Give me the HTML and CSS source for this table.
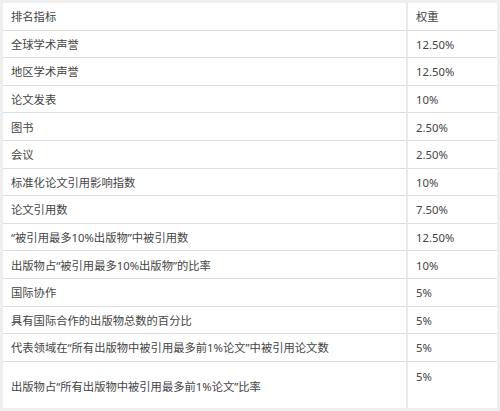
FILE: index.html
```html
<!DOCTYPE html>
<html lang="zh-CN">
<head>
<meta charset="utf-8">
<link rel="stylesheet" href="styles.css">
</head>
<body>
<table class="rank-table">
  <tbody>
    <tr><td class="name">排名指标</td><td class="weight">权重</td></tr>
    <tr><td class="name">全球学术声誉</td><td class="weight">12.50%</td></tr>
    <tr><td class="name">地区学术声誉</td><td class="weight">12.50%</td></tr>
    <tr><td class="name">论文发表</td><td class="weight">10%</td></tr>
    <tr><td class="name">图书</td><td class="weight">2.50%</td></tr>
    <tr><td class="name">会议</td><td class="weight">2.50%</td></tr>
    <tr><td class="name">标准化论文引用影响指数</td><td class="weight">10%</td></tr>
    <tr><td class="name">论文引用数</td><td class="weight">7.50%</td></tr>
    <tr><td class="name">“被引用最多10%出版物”中被引用数</td><td class="weight">12.50%</td></tr>
    <tr><td class="name">出版物占“被引用最多10%出版物”的比率</td><td class="weight">10%</td></tr>
    <tr><td class="name">国际协作</td><td class="weight">5%</td></tr>
    <tr><td class="name">具有国际合作的出版物总数的百分比</td><td class="weight">5%</td></tr>
    <tr><td class="name">代表领域在“所有出版物中被引用最多前1%论文”中被引用论文数</td><td class="weight">5%</td></tr>
    <tr class="last"><td class="name">出版物占“所有出版物中被引用最多前1%论文”比率</td><td class="weight top">5%</td></tr>
  </tbody>
</table>
</body>
</html>
```

FILE: styles.css
```css
html, body {
  margin: 0;
  padding: 0;
  background: #ffffff;
}

.rank-table {
  width: 500px;
  border: 3px solid #efefef;
  border-spacing: 0;
  border-collapse: separate;
  font-family: "Noto Sans", "Noto Sans CJK SC", sans-serif;
  font-size: 11.3px;
  color: #444444;
  table-layout: fixed;
}

.rank-table td {
  height: 27.6px;
  padding: 2px 8px 0 8px;
  border-bottom: 1px solid #dedede;
  vertical-align: middle;
  white-space: nowrap;
  line-height: 16px;
  box-sizing: border-box;
}

.rank-table .name {
  width: 405px;
  border-right: 2px solid #e9e9e9;
}

.rank-table tr.last td {
  height: 46px;
  border-bottom: none;
  padding-top: 4px;
}

.rank-table tr.last td.top {
  vertical-align: top;
  padding-top: 7px;
}
```
